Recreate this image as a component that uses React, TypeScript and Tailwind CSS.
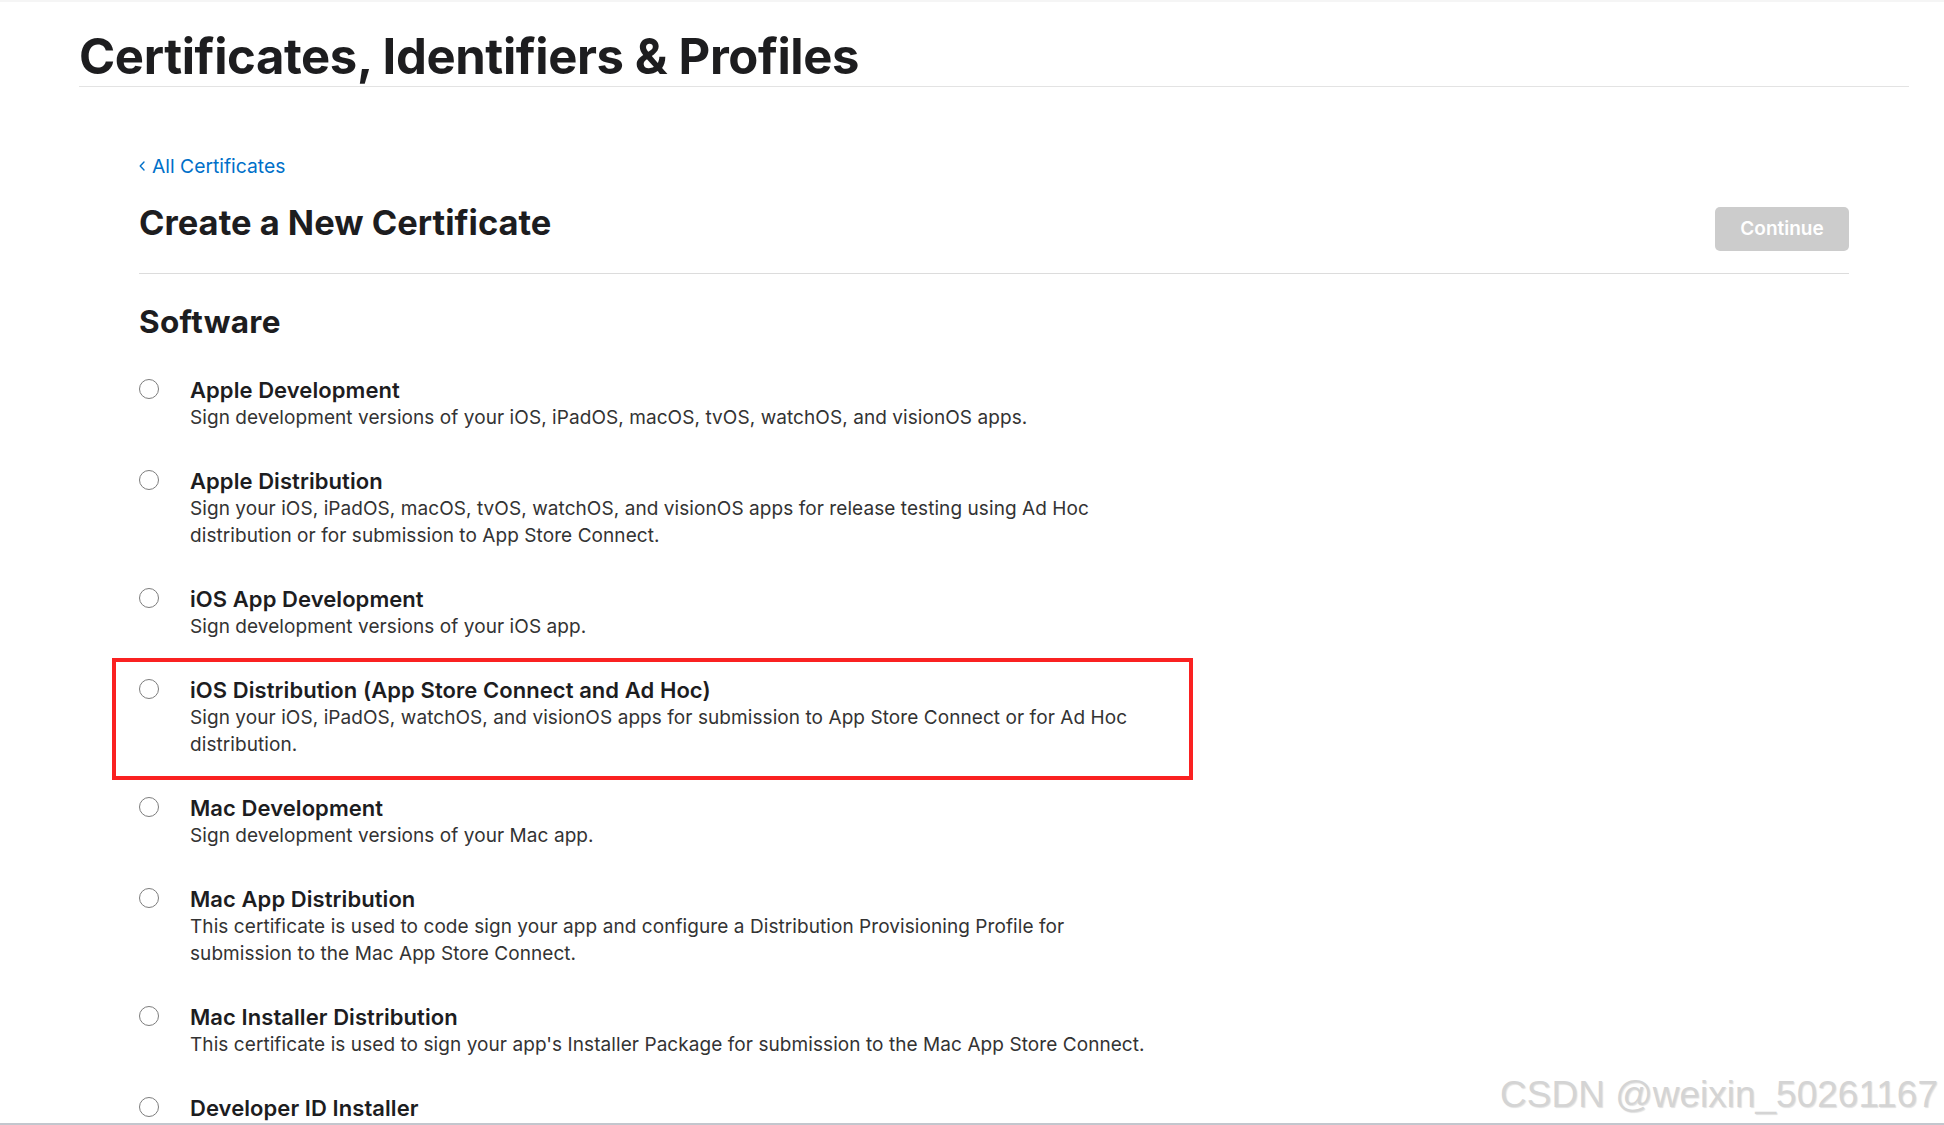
import React from "react";

type Item = { title: string; lines: string[]; highlight?: boolean };

const items: Item[] = [
  {
    title: "Apple Development",
    lines: ["Sign development versions of your iOS, iPadOS, macOS, tvOS, watchOS, and visionOS apps."],
  },
  {
    title: "Apple Distribution",
    lines: [
      "Sign your iOS, iPadOS, macOS, tvOS, watchOS, and visionOS apps for release testing using Ad Hoc",
      "distribution or for submission to App Store Connect.",
    ],
  },
  {
    title: "iOS App Development",
    lines: ["Sign development versions of your iOS app."],
  },
  {
    title: "iOS Distribution (App Store Connect and Ad Hoc)",
    lines: [
      "Sign your iOS, iPadOS, watchOS, and visionOS apps for submission to App Store Connect or for Ad Hoc",
      "distribution.",
    ],
    highlight: true,
  },
  {
    title: "Mac Development",
    lines: ["Sign development versions of your Mac app."],
  },
  {
    title: "Mac App Distribution",
    lines: [
      "This certificate is used to code sign your app and configure a Distribution Provisioning Profile for",
      "submission to the Mac App Store Connect.",
    ],
  },
  {
    title: "Mac Installer Distribution",
    lines: ["This certificate is used to sign your app's Installer Package for submission to the Mac App Store Connect."],
  },
  {
    title: "Developer ID Installer",
    lines: [],
  },
];

function Radio() {
  return (
    <span className="mt-[3px] block h-[20px] w-[20px] shrink-0 rounded-full border-[1.5px] border-[#7d7d7d] bg-white" />
  );
}

export default function App() {
  return (
    <div
      className="relative h-[1125px] w-full overflow-hidden bg-white text-[#1d1d1f]"
      style={{ fontFamily: "Inter, 'Noto Sans', sans-serif" }}
    >
      <div className="h-[2px] bg-[#f5f5f5]" />
      <header className="pl-[79px] pr-[35px] pt-[25px]">
        <h1 className="border-b border-[#e3e3e3] text-[49px] font-bold leading-[59px] tracking-[-0.008em]">
          Certificates, Identifiers &amp; Profiles
        </h1>
      </header>

      <main className="pl-[139px] pr-[95px]">
        <a className="mt-[67px] flex h-[24px] items-center gap-[7px] text-[19.3px] leading-[24px] text-[#0070c9]">
          <svg width="6" height="10" viewBox="0 0 6 10" fill="none">
            <path d="M5 1L1.2 5L5 9" stroke="#0070c9" strokeWidth="1.4" strokeLinecap="round" strokeLinejoin="round" />
          </svg>
          <span>All Certificates</span>
        </a>

        <div className="mt-[23px] flex items-start justify-between border-b border-[#dcdcdc] pb-[22px]">
          <h2 className="text-[34.5px] font-bold leading-[44px]">Create a New Certificate</h2>
          <button className="mt-[6px] h-[44px] w-[134px] rounded-[5px] bg-[#cccccc] text-[19px] font-semibold text-white">
            Continue
          </button>
        </div>

        <h3 className="mt-[28px] text-[31.5px] font-bold leading-[40px] tracking-[0.01em]">Software</h3>

        <ul className="mt-[34px] flex flex-col gap-[36px]">
          {items.map((it) => (
            <li key={it.title} className="relative flex gap-[31px]">
              {it.highlight && (
                <div className="pointer-events-none absolute left-[-27px] top-[-18px] bottom-[-22px] w-[1081px] border-[4px] border-[#fa2121]" />
              )}
              <Radio />
              <div>
                <div className="text-[22px] font-semibold leading-[28px] tracking-[0.003em]">{it.title}</div>
                {it.lines.length > 0 && (
                  <div className="text-[19px] leading-[27px] tracking-[0.07px] text-[#333333]">
                    {it.lines.map((l, i) => (
                      <div key={i} className="whitespace-nowrap">
                        {l}
                      </div>
                    ))}
                  </div>
                )}
              </div>
            </li>
          ))}
        </ul>
      </main>

      <div
        className="pointer-events-none absolute bottom-[8px] right-[6px] text-[37px] leading-[44px] text-[#d4d4d4]"
        style={{ fontFamily: "'Liberation Sans', Arial, sans-serif", textShadow: "1px 1px 1px rgba(0,0,0,0.12), -1px -1px 0 rgba(255,255,255,0.9)" }}
      >
        CSDN @weixin_50261167
      </div>
      <div className="absolute bottom-0 left-0 right-0 h-[2px] bg-[#c3c6cd]" />
    </div>
  );
}
